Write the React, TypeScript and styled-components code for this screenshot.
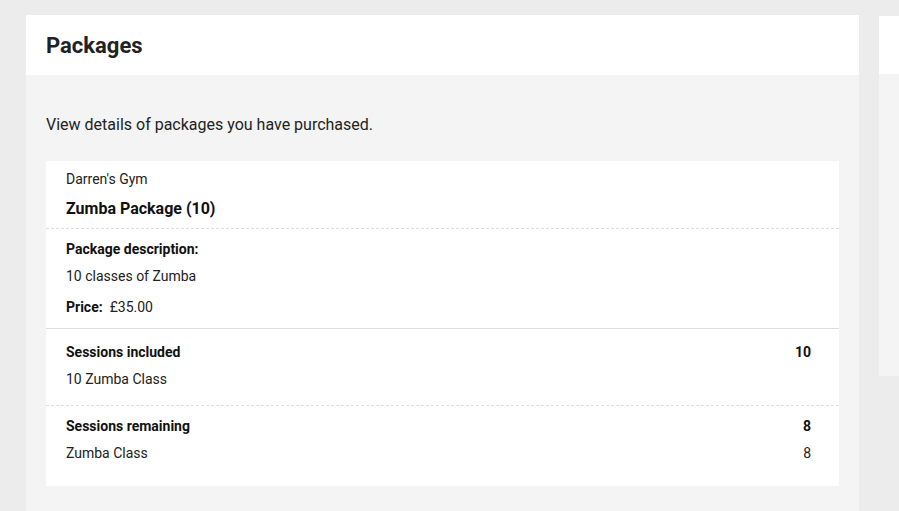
import React from "react";
import styled, { createGlobalStyle } from "styled-components";

const GlobalStyle = createGlobalStyle`
  html, body {
    margin: 0;
    padding: 0;
    background: #ececec;
    overflow: hidden;
  }
  body {
    font-family: Roboto, "Liberation Sans", Arial, sans-serif;
    color: #212121;
  }
`;

const Page = styled.div`
  display: flex;
  align-items: stretch;
  gap: 20px;
  padding: 15px 0 0 26px;
  width: 100vw;
  height: 100vh;
  box-sizing: border-box;
  overflow: hidden;
`;

const MainPanel = styled.section`
  width: 833px;
  flex: none;
  display: flex;
  flex-direction: column;
`;

const PanelHeader = styled.header<{ $h: number }>`
  height: ${(p) => p.$h}px;
  background: #ffffff;
  display: flex;
  align-items: center;
  padding: 0 20px;
  flex: none;
`;

const Title = styled.h1`
  margin: 0;
  font-size: 22px;
  font-weight: 700;
  color: #222222;
`;

const PanelBody = styled.div`
  background: #f4f4f4;
  flex: 1;
  padding: 38px 20px 0;
`;

const Intro = styled.p`
  margin: 0 0 24px;
  font-size: 16px;
  line-height: 24px;
  color: #222222;
`;

const Card = styled.div`
  background: #ffffff;
`;

const Section = styled.div<{ $pt: number; $pb: number; $border?: "solid" | "dashed" }>`
  padding: ${(p) => p.$pt}px 28px ${(p) => p.$pb}px 20px;
  border-bottom: ${(p) => (p.$border ? `1px ${p.$border} #dedede` : "none")};
`;

const Row = styled.div<{ $mt?: number }>`
  display: flex;
  justify-content: space-between;
  align-items: baseline;
  margin-top: ${(p) => p.$mt ?? 0}px;
  font-size: 14px;
  line-height: 20px;
`;

const Bold = styled.span`
  font-weight: 700;
  color: #111111;
`;

const Plain = styled.span`
  font-weight: 400;
`;

const PriceLabel = styled.span`
  font-weight: 700;
  color: #111111;
  margin-right: 7px;
`;

const Gym = styled.div`
  font-size: 14px;
  line-height: 20px;
`;

const PackageName = styled.div`
  margin-top: 8px;
  font-size: 16px;
  line-height: 24px;
  font-weight: 700;
  color: #111111;
`;

const SidePanel = styled.aside`
  flex: 1;
  min-width: 0;
  margin-top: 1px;
  display: flex;
  flex-direction: column;
  align-self: flex-start;
`;

const SideBody = styled.div`
  background: #f4f4f4;
  height: 302px;
`;

export default function App() {
  return (
    <>
      <GlobalStyle />
      <Page>
        <MainPanel>
          <PanelHeader $h={60}>
            <Title>Packages</Title>
          </PanelHeader>
          <PanelBody>
            <Intro>View details of packages you have purchased.</Intro>
            <Card>
              <Section $pt={8} $pb={7} $border="dashed">
                <Gym>Darren's Gym</Gym>
                <PackageName>Zumba Package (10)</PackageName>
              </Section>
              <Section $pt={10} $pb={11} $border="solid">
                <Row>
                  <Bold>Package description:</Bold>
                </Row>
                <Row $mt={7}>
                  <Plain>10 classes of Zumba</Plain>
                </Row>
                <Row $mt={11}>
                  <span>
                    <PriceLabel>Price:</PriceLabel>
                    <Plain>£35.00</Plain>
                  </span>
                </Row>
              </Section>
              <Section $pt={13} $pb={16} $border="dashed">
                <Row>
                  <Bold>Sessions included</Bold>
                  <Bold>10</Bold>
                </Row>
                <Row $mt={7}>
                  <Plain>10 Zumba Class</Plain>
                </Row>
              </Section>
              <Section $pt={10} $pb={23}>
                <Row>
                  <Bold>Sessions remaining</Bold>
                  <Bold>8</Bold>
                </Row>
                <Row $mt={7}>
                  <Plain>Zumba Class</Plain>
                  <Plain>8</Plain>
                </Row>
              </Section>
            </Card>
          </PanelBody>
        </MainPanel>
        <SidePanel>
          <PanelHeader $h={58} />
          <SideBody />
        </SidePanel>
      </Page>
    </>
  );
}
